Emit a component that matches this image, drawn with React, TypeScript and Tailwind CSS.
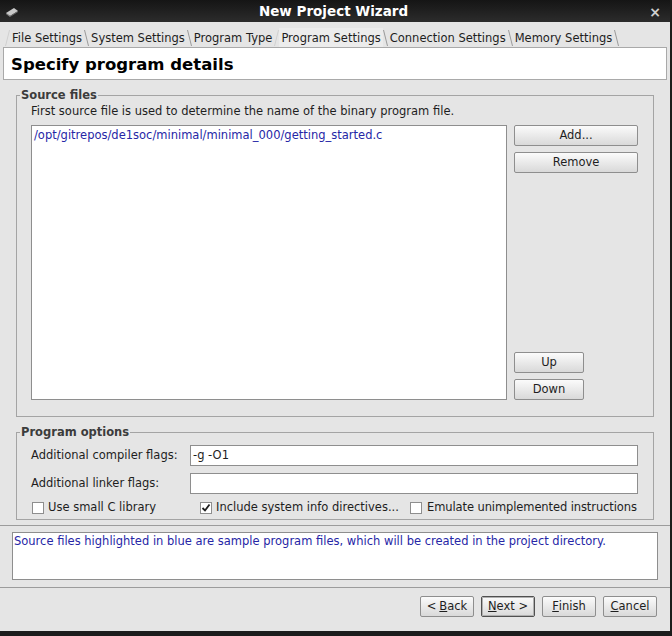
import React from "react";

const font = { fontFamily: '"DejaVu Sans", "Liberation Sans", sans-serif' };

function Slant({ dir = "back", light = false }: { dir?: "back" | "fwd"; light?: boolean }) {
  return (
    <svg width="5" height="18" viewBox="0 0 5 18" className="shrink-0">
      {dir === "back" ? (
        <line x1="0.5" y1="1" x2="4.5" y2="17" stroke={light ? "#d0d0d0" : "#9a9a9a"} strokeWidth="1" />
      ) : (
        <line x1="0.5" y1="17" x2="4.5" y2="1" stroke={light ? "#d0d0d0" : "#9a9a9a"} strokeWidth="1" />
      )}
    </svg>
  );
}

function TitleBar() {
  return (
    <div className="h-[22px] flex items-center bg-gradient-to-b from-[#151515] to-[#2c2c2c] px-[5px] pt-[2px]">
      <svg width="14" height="10" viewBox="0 0 14 10" className="shrink-0">
        <polygon points="1,6 9,1 13,4 5,9" fill="#c9c9c9" />
        <polygon points="1,6 5,9 5,10 1,7" fill="#8a8a8a" />
        <polygon points="5,9 13,4 13,5 5,10" fill="#6e6e6e" />
      </svg>
      <div className="flex-1 text-center text-white font-bold text-[13.5px] leading-none">New Project Wizard</div>
      <div className="w-[14px] text-center text-[#cfcfcf] font-bold text-[14px] leading-none mr-[3px]">×</div>
    </div>
  );
}

const tabs = ["File Settings", "System Settings", "Program Type", "Program Settings", "Connection Settings", "Memory Settings"];

function Tabs() {
  return (
    <div className="h-[20px] mt-[5px] flex items-end pl-[5px]">
      <Slant dir="fwd" light />
      {tabs.map((t, i) => {
        const active = t === "Program Settings";
        return (
          <React.Fragment key={t}>
            <div
              className={`h-[19px] flex items-center pt-[3px] px-[2px] text-[11.5px] text-[#1e1e1e] whitespace-nowrap ${active ? "bg-[#ececec]" : ""}`}
            >
              {t}
            </div>
            {tabs[i + 1] === "Program Settings" ? <Slant dir="fwd" light /> : <Slant />}
          </React.Fragment>
        );
      })}
    </div>
  );
}

function Btn({ children, className = "" }: { children: React.ReactNode; className?: string }) {
  return (
    <div
      className={`h-[21px] flex items-center justify-center text-[11.5px] text-[#1e1e1e] border border-[#8e8e8e] rounded-[2px] bg-gradient-to-b from-[#fbfbfb] to-[#d9d9d9] whitespace-nowrap ${className}`}
    >
      {children}
    </div>
  );
}

function Check({ checked = false }: { checked?: boolean }) {
  return (
    <div className="w-[12px] h-[12px] border border-[#8e8e8e] bg-white flex items-center justify-center shrink-0">
      {checked && (
        <svg width="10" height="10" viewBox="0 0 10 10">
          <path d="M1.5 5 L4 7.5 L8.5 1.5" stroke="#1e1e1e" strokeWidth="1.8" fill="none" />
        </svg>
      )}
    </div>
  );
}

export default function App() {
  return (
    <div style={font} className="w-[672px] h-[636px] flex flex-col bg-[#e5e5e5] border-r-[2px] border-b-[5px] border-[#1c1c1c] overflow-hidden">
      <TitleBar />
      <Tabs />
      <div className="mx-[3px] h-[33px] bg-white border border-[#a9a9a9] flex items-center pl-[7px] pt-[3px]">
        <span className="text-[16.5px] font-bold text-black">Specify program details</span>
      </div>

      <fieldset className="mx-[16px] mt-[8px] min-w-0 border border-[#a4a4a4] px-[14px] pb-[16px]">
        <legend className="ml-[-11px] px-[1px] text-[11.5px] font-bold text-[#3c3c3c] leading-[14px]">Source files</legend>
        <div className="mt-[2px] text-[11.5px] text-[#1e1e1e] leading-[14px]">
          First source file is used to determine the name of the binary program file.
        </div>
        <div className="mt-[7px] flex gap-[7px]">
          <div className="w-[476px] h-[275px] bg-white border border-[#8e8e8e] pl-[2px] pt-[1px]">
            <div className="text-[11.5px] text-[#2626a6] leading-[16px]">/opt/gitrepos/de1soc/minimal/minimal_000/getting_started.c</div>
          </div>
          <div className="flex-1 flex flex-col">
            <Btn className="w-[124px]">Add...</Btn>
            <Btn className="w-[124px] mt-[6px]">Remove</Btn>
            <div className="flex-1" />
            <Btn className="w-[70px]">Up</Btn>
            <Btn className="w-[70px] mt-[6px]">Down</Btn>
          </div>
        </div>
      </fieldset>

      <fieldset className="mx-[16px] mt-[8px] min-w-0 border border-[#a4a4a4] pl-[14px] pr-[15px] pb-[4px]">
        <legend className="ml-[-11px] px-[1px] text-[11.5px] font-bold text-[#3c3c3c] leading-[14px]">Program options</legend>
        <div className="mt-[6px] flex items-center">
          <div className="w-[159px] text-[11.5px] text-[#1e1e1e]">Additional compiler flags:</div>
          <div className="flex-1 h-[21px] bg-white border border-[#8e8e8e] flex items-center pl-[2px] text-[11.5px] text-[#1e1e1e]">-g -O1</div>
        </div>
        <div className="mt-[7px] flex items-center">
          <div className="w-[159px] text-[11.5px] text-[#1e1e1e]">Additional linker flags:</div>
          <div className="flex-1 h-[21px] bg-white border border-[#8e8e8e]" />
        </div>
        <div className="mt-[7px] h-[14px] flex items-center text-[11.5px] text-[#1e1e1e] whitespace-nowrap">
          <div className="w-[169px] flex items-center gap-[4px] pl-[1px]">
            <Check />
            <span>Use small C library</span>
          </div>
          <div className="w-[210px] flex items-center gap-[4px]">
            <Check checked />
            <span>Include system info directives...</span>
          </div>
          <div className="flex items-center gap-[5px]">
            <Check />
            <span className="tracking-[-0.1px]">Emulate unimplemented instructions</span>
          </div>
        </div>
      </fieldset>

      <div className="mt-[5px] h-px bg-[#9c9c9c]" />
      <div className="mx-[12px] mt-[6px] h-[48px] bg-white border border-[#8e8e8e] pl-[1px]">
        <div className="text-[11.5px] text-[#2626a6] leading-[16px]">
          Source files highlighted in blue are sample program files, which will be created in the project directory.
        </div>
      </div>
      <div className="mt-[7px] h-px bg-[#9c9c9c]" />
      <div className="mt-[8px] flex justify-end gap-[7px] pr-[13px]">
        <Btn className="w-[54px]">
          &lt; <span className="underline ml-[3px]">B</span>ack
        </Btn>
        <Btn className="w-[54px] border-[#505050] outline outline-1 outline-[#b0b0b0] -outline-offset-2">
          <span className="underline">N</span>ext &gt;
        </Btn>
        <Btn className="w-[54px]">
          <span className="underline">F</span>inish
        </Btn>
        <Btn className="w-[54px]">
          <span className="underline">C</span>ancel
        </Btn>
      </div>
    </div>
  );
}
